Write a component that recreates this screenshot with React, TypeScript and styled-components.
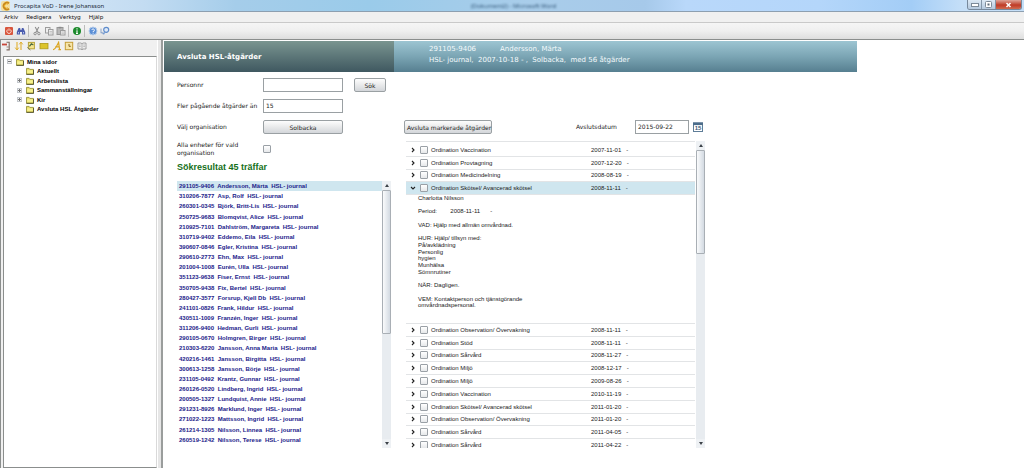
import React from 'react';
import styled, { createGlobalStyle, css } from 'styled-components';

const ui = `"DejaVu Sans", Verdana, sans-serif`;
const arial = `"Liberation Sans", Arial, sans-serif`;
const segoe = `"Noto Sans", "Segoe UI", sans-serif`;

const GlobalStyle = createGlobalStyle`
  *, *::before, *::after { box-sizing: border-box; }
  body { margin: 0; background: #fff; color: #222; font-family: ${ui}; font-size: 6px; }
  ul { list-style: none; margin: 0; padding: 0; }
  button, input { font: inherit; color: inherit; margin: 0; }
  svg { display: block; flex: none; }
`;

/* ---------- window frame ---------- */

const Window = styled.div`
  display: flex;
  flex-direction: column;
  height: 100vh;
  min-height: 320px;
  overflow: hidden;
`;

const TitleBar = styled.header`
  position: relative;
  display: flex;
  align-items: center;
  gap: 3px;
  height: 12px;
  flex: none;
  padding-left: 1px;
  border-bottom: 1px solid #8d9fb0;
  background: linear-gradient(90deg, #dcebf8 0%, #c3dcf2 14%, #a5cdea 23%, #9acbea 36%, #a9cdea 52%, #a6c9ea 63%, #b9d8fa 67%, #b4d6fa 80%, #a3cdf6 89%, #c5dff8 94%, #c5dff8 100%);
  font-family: ${segoe};
`;

const WindowTitle = styled.h1`
  margin: 0;
  font-size: 6px;
  line-height: 10px;
  font-weight: 400;
  color: #1c2a38;
  flex: 1;
`;

const GhostTitle = styled.span`
  position: absolute;
  left: 46%;
  top: 1px;
  font-size: 6px;
  line-height: 10px;
  color: #35597a;
  filter: blur(1px);
  white-space: pre;
`;

const CaptionButtons = styled.div`
  display: flex;
  align-self: flex-start;
  margin-right: 2px;
  border: 1px solid #77899c;
  border-top: 0;
  border-radius: 0 0 3px 3px;
  overflow: hidden;
`;

const CaptionButton = styled.button<{ $close?: boolean }>`
  display: flex;
  align-items: center;
  justify-content: center;
  width: ${p => (p.$close ? 25 : 14)}px;
  height: 9px;
  padding: 0;
  border: 0;
  border-right: ${p => (p.$close ? 0 : 1)}px solid #8496a8;
  background: ${p => (p.$close ? 'linear-gradient(#dfa397, #c4513d 45%, #c03a26 55%, #cf6b50)' : 'linear-gradient(#dde9f5, #b4c9de)')};
`;

const MenuBar = styled.nav`
  display: flex;
  align-items: center;
  gap: 8px;
  height: 11px;
  flex: none;
  padding-left: 4px;
  border-bottom: 1px solid #c9c9c9;
  background: #f0f0f0;
  font-family: ${segoe};
`;

const MenuItem = styled.button`
  padding: 0;
  border: 0;
  background: none;
  line-height: 8px;
  color: #111;
`;

const ToolBar = styled.div`
  display: flex;
  align-items: center;
  gap: 2px;
  height: 17px;
  flex: none;
  padding: 0 4px;
  border-bottom: 1px solid #8b8e8d;
  background: linear-gradient(#f5f5f5, #efefef 50%, #dedede);
`;

const ToolButton = styled.button`
  width: 10px;
  height: 10px;
  padding: 0;
  border: 0;
  background: none;
`;

const ToolSeparator = styled.span`
  width: 2px;
  height: 12px;
  border-left: 1px solid #bcbcbc;
`;

const Workspace = styled.div`
  display: flex;
  flex: 1;
  min-height: 0;
`;

/* ---------- navigation pane ---------- */

const Sidebar = styled.aside`
  display: flex;
  flex-direction: column;
  width: 157px;
  flex: none;
  border-left: 1px solid #8b8e8d;
  background: #f0f0f0;
`;

const PaneTools = styled.div`
  display: flex;
  align-items: center;
  justify-content: space-between;
  width: 86px;
  height: 16px;
  padding-bottom: 4px;
`;

const TreeBox = styled.div`
  flex: 1;
  margin: 0 0 0 2px;
  border: 1px solid #8b8e8d;
  border-right-color: #d9d9d9;
  background: #fff;
`;

const Tree = styled.ul`
  display: grid;
  grid-auto-rows: 1fr;
  height: 57px;
`;

const TreeRow = styled.li<{ $child?: boolean }>`
  display: flex;
  align-items: center;
  gap: 3px;
  padding-left: ${p => (p.$child ? 13 : 3)}px;
  font-family: ${arial};
  font-weight: 700;
  color: #000;
`;

const Expander = styled.button<{ $hidden?: boolean }>`
  display: flex;
  align-items: center;
  justify-content: center;
  width: 5px;
  height: 5px;
  margin-right: 1px;
  padding: 0;
  border: 1px solid #c3c7cc;
  background: #f4f4f4;
  visibility: ${p => (p.$hidden ? 'hidden' : 'visible')};
`;

const Splitter = styled.div`
  width: 6px;
  flex: none;
  border-left: 1px solid #fff;
  border-right: 2px solid #9a9d9c;
  background: #e6e6e6;
`;

/* ---------- main page ---------- */

const Page = styled.main`
  display: flex;
  flex-direction: column;
  flex: 1;
  min-width: 0;
  padding: 1px 0 20px 1px;
  background: #fff;
`;

const Banner = styled.div`
  display: grid;
  grid-template-columns: 230px minmax(0, 463px);
  height: 31px;
  flex: none;
`;

const BannerTitle = styled.h2`
  display: flex;
  align-items: center;
  margin: 0;
  padding-left: 13px;
  background: linear-gradient(#7a9590, #5c7678 50%, #3f5860);
  color: #fff;
  font-size: 7px;
`;

const BannerInfo = styled.div`
  display: flex;
  flex-direction: column;
  justify-content: center;
  padding: 0 0 3px 35px;
  background: linear-gradient(#9dc5d2, #7ba5b4 50%, #567f90);
  color: #f4fafc;
  font-size: 7px;
  line-height: 11px;
  white-space: pre;
`;

const PersonLine = styled.div`
  display: flex;
  gap: 24px;
`;

const Columns = styled.div`
  display: grid;
  grid-template-columns: 214px minmax(0, 302px);
  column-gap: 13px;
  grid-template-rows: minmax(0, 1fr);
  flex: 1;
  min-height: 0;
  padding: 6px 0 0 13px;
`;

const Column = styled.section`
  display: flex;
  flex-direction: column;
  min-height: 0;
`;

const SearchForm = styled.form`
  display: grid;
  grid-template-columns: 86px 80px 32px;
  grid-template-rows: 14px 14px 14px 16px;
  row-gap: 7px;
  align-items: center;
`;

const Label = styled.label`
  line-height: 8px;
`;

const field = css`
  width: 100%;
  height: 14px;
  border: 1px solid #9aa0a3;
`;

const TextField = styled.input`
  ${field}
  padding: 0 2px 2px;
  background: #fff;
`;

const Button = styled.button`
  ${field}
  padding: 0 2px;
  border-radius: 2px;
  background: linear-gradient(#fdfdfd, #e9eaeb 50%, #d3d6da);
  white-space: nowrap;
`;

const SearchButton = styled(Button)`
  margin-left: 11px;
`;

const Check = styled.input`
  appearance: none;
  display: block;
  width: 8px;
  height: 8px;
  flex: none;
  border: 1px solid #9aa0a6;
  border-radius: 1px;
  background: linear-gradient(#fff, #e6e8ea);
`;

const ResultHeading = styled.h3`
  margin: 5px 0 9px;
  font: 700 9px/10px ${arial};
  color: #15701a;
`;

const ScrollArea = styled.div`
  display: flex;
  flex: 1;
  min-height: 0;
`;

const Viewport = styled.div`
  flex: 1;
  min-width: 0;
  overflow: hidden;
`;

const Patients = styled.ul`
  display: grid;
  grid-auto-rows: 1fr;
  height: 274px;
`;

const PatientRow = styled.li<{ $selected?: boolean }>`
  display: flex;
  align-items: center;
  padding-left: 2px;
  background: ${p => (p.$selected ? '#cfe6ef' : 'transparent')};
`;

const PatientLink = styled.a`
  font: 700 6px/8px ${arial};
  color: #22228a;
  text-decoration: none;
  white-space: pre;
`;

const Track = styled.div`
  display: flex;
  flex-direction: column;
  align-items: stretch;
  width: 9px;
  flex: none;
  background: #e8ecf0;
`;

const ArrowButton = styled.button`
  display: flex;
  align-items: center;
  justify-content: center;
  height: 9px;
  padding: 0;
  border: 0;
  background: #eef1f4;
`;

const Thumb = styled.div<{ $size: number }>`
  height: ${p => p.$size}px;
  border: 1px solid #a9afb5;
  border-radius: 1px;
  background: linear-gradient(90deg, #fafbfc, #d3dae2);
`;

const TrackFill = styled.div`
  flex: 1;
`;

/* ---------- measures ---------- */

const ActionBar = styled.div`
  display: flex;
  align-items: center;
  margin-top: 42px;
`;

const CloseButton = styled(Button)`
  width: 88px;
`;

const DateGroup = styled.div`
  display: flex;
  align-items: center;
  margin-left: auto;
  margin-right: 3px;
`;

const DateLabel = styled(Label)`
  width: 59px;
`;

const DateField = styled(TextField)`
  width: 54px;
  margin-right: 4px;
`;

const MeasureArea = styled(ScrollArea)`
  margin-top: 7px;
  padding: 0 1px 0 2px;
  gap: 1px;
`;

const MeasureViewport = styled(Viewport)`
  border-top: 1px solid #e2e4e6;
  padding-top: 2px;
`;

const MeasureGroup = styled.ul<{ $height: number }>`
  display: grid;
  grid-auto-rows: 1fr;
  height: ${p => p.$height}px;
  font-family: ${arial};
`;

const MeasureRow = styled.li<{ $open?: boolean }>`
  display: flex;
  align-items: center;
  border-bottom: 1px solid #e2e4e6;
  background: ${p => (p.$open ? '#cfe6ef' : 'transparent')};
  color: #1a1a1a;
`;

const Toggle = styled.button`
  display: flex;
  align-items: center;
  justify-content: center;
  width: 14px;
  height: 8px;
  padding: 0;
  border: 0;
  background: none;
`;

const MeasureLabel = styled.label`
  display: flex;
  align-items: center;
  gap: 3px;
  flex: 1;
  line-height: 8px;
`;

const MeasureDate = styled.span`
  width: 104px;
  line-height: 8px;
  white-space: pre;
`;

const Detail = styled.div`
  height: 129px;
  padding: 0 0 14px 12px;
  border-bottom: 1px solid #e2e4e6;
  font-family: ${arial};
  color: #1a1a1a;
`;

const DetailText = styled.div`
  display: grid;
  grid-auto-rows: 1fr;
  height: 100%;
`;

const DetailLine = styled.div`
  line-height: 6px;
  min-height: 0;
  white-space: pre;
`;

/* ---------- icons ---------- */

const Icon = ({ children, size = 10 }: { children: React.ReactNode; size?: number }) => (
  <svg width={size} height={size} viewBox="0 0 10 10" fill="none" aria-hidden="true">{children}</svg>
);

const AppIcon = () => (
  <Icon>
    <rect x="0" y="0" width="9" height="10" rx="2" fill="#f3dfa0" />
    <path d="M8 2.2A3.4 3.4 0 1 0 8 7.8" stroke="#c98a1c" strokeWidth="2" />
    <path d="M6.8 3.4A2 2 0 1 0 6.8 6.6" stroke="#f0b62c" strokeWidth="1" />
  </Icon>
);
const PowerIcon = () => (
  <Icon>
    <rect x="1" y="1" width="8" height="8" rx="1" fill="#d8553c" />
    <path d="M3.5 3.6a2.2 2.2 0 1 0 3 0M5 2.4v2.4" stroke="#ffe9e2" strokeWidth=".9" />
  </Icon>
);
const BinocularsIcon = () => (
  <Icon>
    <path d="M2.6 2h1.5l.5 2h.8l.5-2h1.5L9.2 6v2.6H6V6H4v2.6H.8V6z" fill="#4a5cae" />
    <path d="M2 6h1v1.6H2zM7 6h1v1.6H7z" fill="#b8c4ee" />
  </Icon>
);
const ScissorsIcon = () => (
  <Icon>
    <path d="M3.2 1l3 5.4M6.8 1l-3 5.4" stroke="#8e8e8e" strokeWidth="1.1" />
    <circle cx="3.1" cy="7.6" r="1.2" stroke="#8e8e8e" />
    <circle cx="6.9" cy="7.6" r="1.2" stroke="#8e8e8e" />
  </Icon>
);
const CopyIcon = () => (
  <Icon>
    <rect x="1.5" y="1.5" width="4.5" height="5.5" fill="#eee" stroke="#9c9c9c" />
    <rect x="4.5" y="3.5" width="4.5" height="5.5" fill="#eee" stroke="#9c9c9c" />
    <path d="M5.5 5.5h2.6M5.5 7h2.6" stroke="#aaa" strokeWidth=".6" />
  </Icon>
);
const PasteIcon = () => (
  <Icon>
    <rect x="1" y="1.5" width="6" height="7" fill="#b9b9b9" stroke="#969696" />
    <rect x="2.6" y=".8" width="2.8" height="1.6" fill="#8a8a8a" />
    <rect x="4.5" y="4.5" width="4.5" height="4.5" fill="#eee" stroke="#9c9c9c" />
    <path d="M5.5 6h2.4M5.5 7.4h2.4" stroke="#aaa" strokeWidth=".6" />
  </Icon>
);
const InfoIcon = () => (
  <Icon>
    <circle cx="5" cy="5" r="4" fill="#1c8a2c" />
    <path d="M5 2.2v1.2M5 4.2v3.4M4 7.5h2" stroke="#fff" strokeWidth="1.1" />
  </Icon>
);
const HelpIcon = () => (
  <Icon>
    <circle cx="5" cy="5" r="4" fill="#5b8fd6" stroke="#b7cdea" />
    <path d="M3.8 4a1.3 1.3 0 1 1 1.3 1.5v.6M5.1 6.8v.9" stroke="#fff" strokeWidth=".9" />
  </Icon>
);
const PointerHelpIcon = () => (
  <Icon>
    <path d="M1 2.6v4.6l1.2-1 1 2.2" stroke="#7f9cc6" strokeWidth=".9" />
    <path d="M4.4 6.2L3.6 8.2" stroke="#5f8ccb" strokeWidth="1.2" />
    <circle cx="6.2" cy="3.8" r="2.5" fill="#dfeaf8" stroke="#5f8ccb" strokeWidth="1.2" />
  </Icon>
);
const ExitIcon = () => (
  <Icon>
    <path d="M1 3.5h5" stroke="#c8473b" strokeWidth="1.8" />
    <path d="M5.5 1.3h2.7v7.6H5.5" stroke="#7e6a62" strokeWidth="1.1" />
    <path d="M5.5 6h2.5" stroke="#a08a80" />
  </Icon>
);
const SlidersIcon = () => (
  <Icon>
    <path d="M3 1v8M7 1v8" stroke="#e0b030" strokeWidth="1.1" />
    <path d="M1.2 6.6L3 9l1.8-2.4M5.2 3.4L7 1l1.8 2.4" stroke="#e0b030" />
  </Icon>
);
const RefreshIcon = () => (
  <Icon>
    <rect x="2.4" y="1.4" width="6" height="6.4" fill="#f6e58c" stroke="#b8a43c" />
    <path d="M3.4 5.4l2-2.6 2 1.2" stroke="#4b6a42" strokeWidth="1.2" />
    <path d="M1.4 6.4l3 2.6" stroke="#7d7a52" />
  </Icon>
);
const CardIcon = () => (
  <Icon>
    <rect x="1" y="2.4" width="8" height="5.4" fill="#dcc42c" stroke="#b09a1c" strokeWidth=".8" />
  </Icon>
);
const LetterIcon = () => (
  <Icon>
    <path d="M1 8.6c2.4 0 4-4.2 5.6-7.2l1 7.2M3.2 5.8h4.4M6.4 8.6h2.6" stroke="#dba520" strokeWidth="1.2" />
  </Icon>
);
const ScheduleIcon = () => (
  <Icon>
    <rect x="1.3" y="1.3" width="7.4" height="7.4" fill="#f7e5a8" stroke="#c59b34" />
    <path d="M5 3v2.3h1.8" stroke="#8c6b1e" />
  </Icon>
);
const BookIcon = () => (
  <Icon>
    <path d="M1 2h3l1 .8L6 2h3v6H6l-1 .8L4 8H1z" fill="#f2f2f2" stroke="#8d8d8d" strokeWidth=".8" />
    <path d="M5 3v5.4M2.2 4h1.4M2.2 5.6h1.4M6.4 4h1.4M6.4 5.6h1.4" stroke="#8d8d8d" strokeWidth=".7" />
  </Icon>
);
const FolderIcon = () => (
  <svg width="8" height="8" viewBox="0 0 8 8" aria-hidden="true">
    <path d="M.5 7.2V1.4h2.6l.7 1h3.7v4.8z" fill="#e9dc62" stroke="#8f8a2e" strokeWidth=".8" />
    <path d="M1.2 3.2h5.6v3H1.2z" fill="#f6f08e" />
    <path d="M.4 7.4h7.2V3" stroke="#45452a" strokeWidth=".8" fill="none" />
  </svg>
);
const CalendarIcon = () => (
  <svg width="10" height="10" viewBox="0 0 10 10" aria-hidden="true">
    <rect x=".5" y="1" width="9" height="8.5" fill="#fff" stroke="#5f7d98" />
    <rect x="0" y=".5" width="10" height="2.6" fill="#4c6d8a" />
    <text x="5" y="8.4" textAnchor="middle" fontFamily="Liberation Sans, sans-serif" fontSize="6" fontWeight="700" fill="#3d5c78">15</text>
  </svg>
);
const Arrow = ({ down }: { down?: boolean }) => (
  <svg width="4" height="3" viewBox="0 0 4 3" aria-hidden="true">
    <path d={down ? 'M0 0h4L2 3z' : 'M0 3h4L2 0z'} fill="#3c4248" />
  </svg>
);
const Chevron = ({ open }: { open?: boolean }) => (
  <svg width="6" height="6" viewBox="0 0 6 6" fill="none" aria-hidden="true">
    <path d={open ? 'M1 2l2 2 2-2' : 'M2 1l2 2-2 2'} stroke="#222" strokeWidth="1.1" />
  </svg>
);

/* ---------- data ---------- */

const patients = [
  ['291105-9406', 'Andersson, Märta'], ['310206-7877', 'Asp, Rolf'], ['260301-0345', 'Björk, Britt-Lis'],
  ['250725-9683', 'Blomqvist, Alice'], ['210925-7101', 'Dahlström, Margareta'], ['310719-9402', 'Eddemo, Eila'],
  ['390607-0846', 'Egler, Kristina'], ['290610-2773', 'Ehn, Max'], ['201004-1008', 'Eurén, Ulla'],
  ['351123-9638', 'Fiser, Ernst'], ['350705-9438', 'Fix, Bertel'], ['280427-3577', 'Forsrup, Kjell Db'],
  ['241101-0826', 'Frank, Hildur'], ['430511-1009', 'Franzén, Inger'], ['311206-9400', 'Hedman, Gurli'],
  ['290105-0670', 'Holmgren, Birger'], ['210303-6220', 'Jansson, Anna Maria'], ['420216-1461', 'Jansson, Birgitta'],
  ['300613-1258', 'Jansson, Börje'], ['231105-0492', 'Krantz, Gunnar'], ['260126-0520', 'Lindberg, Ingrid'],
  ['200505-1327', 'Lundquist, Annie'], ['291231-8926', 'Marklund, Inger'], ['271022-1223', 'Mattsson, Ingrid'],
  ['261214-1305', 'Nilsson, Linnea'], ['260519-1242', 'Nilsson, Terese'], ['281104-0207', 'Nordgren, Elsa'],
];

type Measure = { name: string; date: string; open?: boolean };

const firstMeasures: Measure[] = [
  { name: 'Vaccination', date: '2007-11-01' },
  { name: 'Provtagning', date: '2007-12-20' },
  { name: 'Medicindelning', date: '2008-08-19' },
  { name: 'Skötsel/ Avancerad skötsel', date: '2008-11-11', open: true },
];

const lastMeasures: Measure[] = [
  { name: 'Observation/ Övervakning', date: '2008-11-11' },
  { name: 'Stöd', date: '2008-11-11' },
  { name: 'Sårvård', date: '2008-11-27' },
  { name: 'Miljö', date: '2008-12-17' },
  { name: 'Miljö', date: '2009-08-26' },
  { name: 'Vaccination', date: '2010-11-19' },
  { name: 'Skötsel/ Avancerad skötsel', date: '2011-01-20' },
  { name: 'Observation/ Övervakning', date: '2011-01-20' },
  { name: 'Sårvård', date: '2011-04-05' },
  { name: 'Sårvård', date: '2011-04-22' },
];

const detailLines = [
  'Charlotta Nilsson', '', 'Period:        2008-11-11      -', '', 'VAD: Hjälp med allmän omvårdnad.', '',
  'HUR: Hjälp/ tillsyn med:', 'På/avklädning', 'Personlig', 'hygien', 'Munhälsa', 'Sömnrutiner', '',
  'NÄR: Dagligen.', '', 'VEM: Kontaktperson och tjänstgörande', 'omvårdnadspersonal.',
];

const treeItems = [
  { name: 'Aktuellt' }, { name: 'Arbetslista', expandable: true }, { name: 'Sammanställningar', expandable: true },
  { name: 'Kir', expandable: true }, { name: 'Avsluta HSL Åtgärder' },
];

const paneTools: [string, React.ReactNode][] = [
  ['Stäng', <ExitIcon />], ['Sortera', <SlidersIcon />], ['Uppdatera', <RefreshIcon />], ['Kort', <CardIcon />],
  ['Text', <LetterIcon />], ['Schema', <ScheduleIcon />], ['Bok', <BookIcon />],
];

const Tool = ({ name, children }: { name: string; children: React.ReactNode }) => (
  <ToolButton type="button" aria-label={name}>{children}</ToolButton>
);

const Scrollbar = ({ size }: { size: number }) => (
  <Track>
    <ArrowButton type="button" aria-label="Upp"><Arrow /></ArrowButton>
    <Thumb $size={size} />
    <TrackFill />
    <ArrowButton type="button" aria-label="Ner"><Arrow down /></ArrowButton>
  </Track>
);

const Measures = ({ items, height }: { items: Measure[]; height: number }) => (
  <MeasureGroup $height={height}>
    {items.map(m => (
      <MeasureRow key={m.name + m.date} $open={m.open}>
        <Toggle type="button" aria-label="Visa" aria-expanded={!!m.open}><Chevron open={m.open} /></Toggle>
        <MeasureLabel><Check type="checkbox" />Ordination {m.name}</MeasureLabel>
        <MeasureDate>{m.date}   -</MeasureDate>
      </MeasureRow>
    ))}
  </MeasureGroup>
);

export default function App() {
  return (
    <Window>
      <GlobalStyle />
      <TitleBar>
        <AppIcon />
        <WindowTitle>Procapita VoD - Irene Johansson</WindowTitle>
        <GhostTitle aria-hidden="true">(Dokument2) - Microsoft Word</GhostTitle>
        <CaptionButtons>
          <CaptionButton type="button" aria-label="Minimera">
            <svg width="8" height="4"><rect x=".5" y=".5" width="7" height="3" fill="#fff" stroke="#7d8b99" /></svg>
          </CaptionButton>
          <CaptionButton type="button" aria-label="Återställ">
            <svg width="7" height="7"><rect x=".5" y=".5" width="6" height="6" rx="1" fill="#fff" stroke="#7d8b99" /><rect x="2.5" y="2.5" width="2" height="2" fill="#5b6977" /></svg>
          </CaptionButton>
          <CaptionButton type="button" aria-label="Stäng" $close>
            <svg width="7" height="6" viewBox="0 0 7 6"><path d="M1.5 1l4 4M5.5 1l-4 4" stroke="#fff" strokeWidth="1.5" /></svg>
          </CaptionButton>
        </CaptionButtons>
      </TitleBar>
      <MenuBar>
        {['Arkiv', 'Redigera', 'Verktyg', 'Hjälp'].map(m => <MenuItem type="button" key={m}>{m}</MenuItem>)}
      </MenuBar>
      <ToolBar>
        <Tool name="Avsluta"><PowerIcon /></Tool>
        <Tool name="Sök person"><BinocularsIcon /></Tool>
        <ToolSeparator />
        <Tool name="Klipp ut"><ScissorsIcon /></Tool>
        <Tool name="Kopiera"><CopyIcon /></Tool>
        <Tool name="Klistra in"><PasteIcon /></Tool>
        <ToolSeparator />
        <Tool name="Information"><InfoIcon /></Tool>
        <ToolSeparator />
        <Tool name="Hjälp"><HelpIcon /></Tool>
        <Tool name="Förklaring"><PointerHelpIcon /></Tool>
      </ToolBar>
      <Workspace>
        <Sidebar>
          <PaneTools>
            {paneTools.map(([name, icon]) => <Tool key={name} name={name}>{icon}</Tool>)}
          </PaneTools>
          <TreeBox>
            <Tree>
              <TreeRow>
                <Expander type="button" aria-label="Fäll ihop">
                  <svg width="3" height="3"><path d="M0 1.5h3" stroke="#777" /></svg>
                </Expander>
                <FolderIcon />Mina sidor
              </TreeRow>
              {treeItems.map(t => (
                <TreeRow key={t.name} $child>
                  <Expander type="button" aria-label="Fäll ut" $hidden={!t.expandable}>
                    <svg width="3" height="3"><path d="M0 1.5h3M1.5 0v3" stroke="#777" /></svg>
                  </Expander>
                  <FolderIcon />{t.name}
                </TreeRow>
              ))}
            </Tree>
          </TreeBox>
        </Sidebar>
        <Splitter />
        <Page>
          <Banner>
            <BannerTitle>Avsluta HSL-åtgärder</BannerTitle>
            <BannerInfo>
              <PersonLine><span>291105-9406</span><span>Andersson, Märta</span></PersonLine>
              <div>HSL- journal,  2007-10-18 - ,  Solbacka,  med 56 åtgärder</div>
            </BannerInfo>
          </Banner>
          <Columns>
            <Column>
              <SearchForm onSubmit={e => e.preventDefault()}>
                <Label htmlFor="personnr">Personnr</Label>
                <TextField id="personnr" type="text" />
                <SearchButton type="submit">Sök</SearchButton>
                <Label htmlFor="minimum">Fler pågående åtgärder än</Label>
                <TextField id="minimum" type="text" defaultValue="15" />
                <span />
                <Label htmlFor="organisation">Välj organisation</Label>
                <Button id="organisation" type="button">Solbacka</Button>
                <span />
                <Label htmlFor="all-units">Alla enheter för vald organisation</Label>
                <Check id="all-units" type="checkbox" />
              </SearchForm>
              <ResultHeading>Sökresultat 45 träffar</ResultHeading>
              <ScrollArea>
                <Viewport>
                  <Patients>
                    {patients.map(([id, name], i) => (
                      <PatientRow key={id} $selected={i === 0}>
                        <PatientLink href={`#${id}`}>{id}  {name}  HSL- journal</PatientLink>
                      </PatientRow>
                    ))}
                  </Patients>
                </Viewport>
                <Scrollbar size={144} />
              </ScrollArea>
            </Column>
            <Column>
              <ActionBar>
                <CloseButton type="button">Avsluta markerade åtgärder</CloseButton>
                <DateGroup>
                  <DateLabel htmlFor="end-date">Avslutsdatum</DateLabel>
                  <DateField id="end-date" type="text" defaultValue="2015-09-22" />
                  <Tool name="Välj datum"><CalendarIcon /></Tool>
                </DateGroup>
              </ActionBar>
              <MeasureArea>
                <MeasureViewport>
                  <Measures items={firstMeasures} height={51} />
                  <Detail>
                    <DetailText>
                      {detailLines.map((line, i) => <DetailLine key={i}>{line}</DetailLine>)}
                    </DetailText>
                  </Detail>
                  <Measures items={lastMeasures} height={128} />
                </MeasureViewport>
                <Scrollbar size={104} />
              </MeasureArea>
            </Column>
          </Columns>
        </Page>
      </Workspace>
    </Window>
  );
}
